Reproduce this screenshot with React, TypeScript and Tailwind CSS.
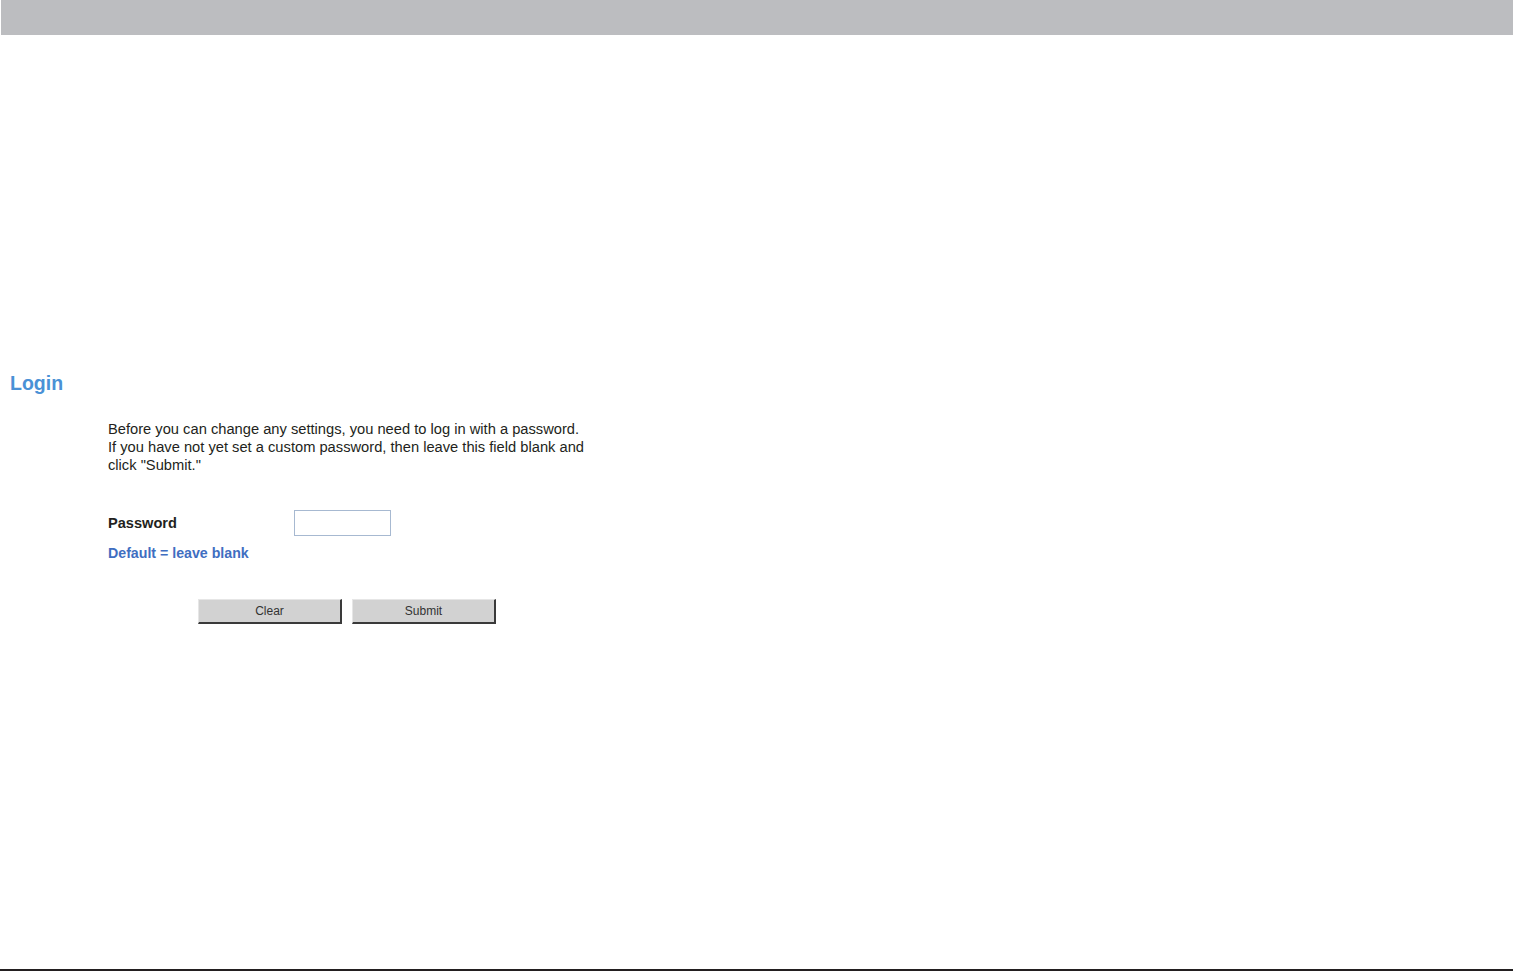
export default function App() {
  return (
    <div
      className="flex h-[971px] flex-col bg-white text-[#231f20]"
      style={{ fontFamily: '"Liberation Sans", Arial, sans-serif' }}
    >
      <div className="ml-[1px] h-[35px] shrink-0 bg-[#bcbdc0]" />
      <div className="flex flex-col">
        <h1 className="mt-[337px] ml-[10px] text-[19.5px] font-bold leading-[22px] text-[#4a91d6]">
          Login
        </h1>
        <div className="ml-[108px] mt-[26px] flex flex-col">
          <p className="w-[500px] text-[14.7px] leading-[18px] text-[#231f20]">
            Before you can change any settings, you need to log in with a password.
            <br />
            If you have not yet set a custom password, then leave this field blank and
            <br />
            click "Submit."
          </p>
          <div className="mt-[36px] flex items-center">
            <span className="w-[186px] text-[14.6px] font-bold leading-[18px] text-[#231f20]">
              Password
            </span>
            <input
              type="password"
              className="h-[26px] w-[97px] border border-[#a7b9d1] bg-white outline-none"
            />
          </div>
          <div className="mt-[8px] text-[14.2px] font-bold leading-[18px] text-[#3f6ec1]">
            Default = leave blank
          </div>
          <div className="mt-[37px] ml-[90px] flex gap-[10px]">
            <button className="h-[25px] w-[144px] border border-t-[#e6e6e6] border-l-[#e6e6e6] border-r-2 border-b-2 border-r-[#3a3a3a] border-b-[#3a3a3a] bg-[#d2d2d2] text-[12px] leading-none text-[#333]">
              Clear
            </button>
            <button className="h-[25px] w-[144px] border border-t-[#e6e6e6] border-l-[#e6e6e6] border-r-2 border-b-2 border-r-[#3a3a3a] border-b-[#3a3a3a] bg-[#d2d2d2] text-[12px] leading-none text-[#333]">
              Submit
            </button>
          </div>
        </div>
      </div>
      <div className="mt-auto h-[2px] shrink-0 bg-[#231f20]" />
    </div>
  );
}
